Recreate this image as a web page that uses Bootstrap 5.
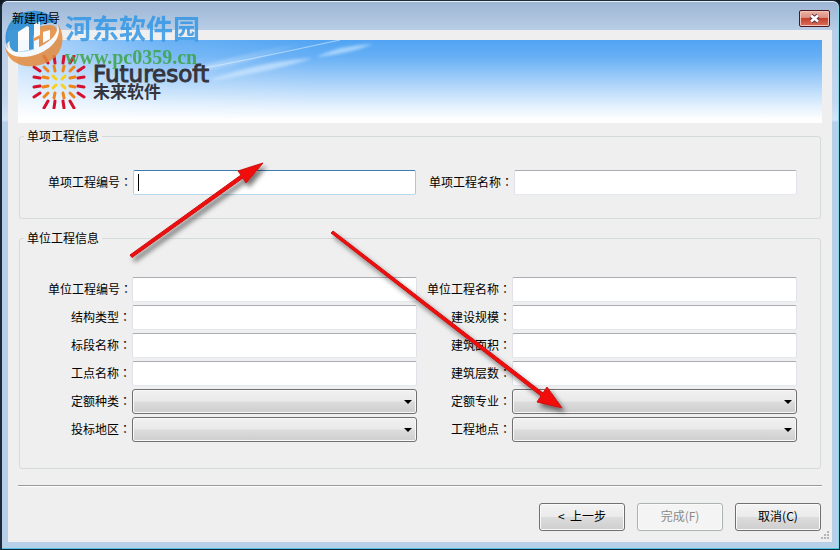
<!DOCTYPE html>
<html lang="zh-CN">
<head>
<meta charset="utf-8">
<meta name="viewport" content="width=device-width, initial-scale=1">
<title>新建向导</title>
<link href="https://cdn.jsdelivr.net/npm/bootstrap@5.3.0/dist/css/bootstrap.min.css" rel="stylesheet">
<style>
body{font-family:"Noto Sans CJK SC","Liberation Sans",sans-serif;font-size:12px;line-height:16px;color:#000;background:#101820}
.win{border:1px solid #1c2a3a;border-left-width:2px;border-bottom-color:#0b2b38;border-radius:7px 7px 0 0;
  background:linear-gradient(#9cb5d4 0,#b9cee6 30px,#c3d7ee 100px,#d3e4f6 119px,#b7d0ea 121px);box-shadow:inset 0 1px #e6eef8,inset 0 -1px #53c3e4,inset -1px 0 #86d6ee}
.title-strip{height:29px;padding:3px 9px 0 10px}
.title-text{margin-top:6px;z-index:2}
.close-btn{width:31px;height:17px;margin-top:6px;border:1px solid #4a1720;border-radius:2px;background:linear-gradient(#eab5a8,#dc8a7b 48%,#c5402c 50%,#d9705b);box-shadow:inset 0 0 0 1px #f3c3ba}
.client{margin:0 7px 7px 6px;padding:10px;background:#efefef}
.banner{height:83px;padding:15px 14px 0;background:linear-gradient(90deg,#ffffff99,#ffffff22 150px,#fff0 300px),linear-gradient(#51a4f3,#66aff5 20%,#a6d0f9 50%,#e0effd 78%,#fff 96%)}
.rays{left:150px;top:0;width:260px;height:83px}
.brand{margin-left:7px;color:#35353d}
.brand-en{font:23px/20px "DejaVu Sans",sans-serif;-webkit-text-stroke:1px #35353d;margin-top:9px}
.brand-zh{font-size:17px;line-height:14px;font-weight:700}
.group{border:1px solid #d5dadd;border-radius:3px;margin:0 1px;min-width:0}
.group legend{font-size:12px;line-height:16px;margin:0 0 0 4px;padding:0 3px}
.group-a{margin-top:5px;padding:26px 23px 23px 0}
.group-b{margin-top:11px;padding:31px 23px 26px 0}
.fields{row-gap:3px}
.group-a .fields{grid-template-columns:113px 1fr 98px 1fr}
.group-b .fields{grid-template-columns:112px 1fr 95px 1fr}
.fields label{white-space:nowrap;text-align:right;padding-bottom:2px}
.group-a .fields label{padding-right:1px}
.group-b .fields input + label,.group-b .fields select + label{padding-right:1px}
.colon{font-family:"Noto Sans CJK TC",sans-serif}
.fields .form-control,.fields .form-select{height:25px;min-height:0;padding:2px 4px;font-size:12px;line-height:16px;border-radius:2px;min-width:0}
.fields .form-control{border-color:#abadb3 #e0e2e8 #e3e9ef #e0e2e8;background-color:#fff}
.fields .editing{border-color:#3d7bad #a4c9e3 #b7d9ed #b5cfe7;background:linear-gradient(#000,#000) 4px 3px/1px 17px no-repeat #fff}
.fields .form-select{border:1px solid #707070;border-radius:3px;box-shadow:inset 0 0 0 1px #f8f8f8;
  background:url("data:image/svg+xml,%3Csvg xmlns='http://www.w3.org/2000/svg' width='8' height='4'%3E%3Cpath d='M0 0h8L4 4z'/%3E%3C/svg%3E") right 4px center/8px 4px no-repeat,linear-gradient(#f1f1f1,#e9e9e9 48%,#dcdcdc 52%,#cecece)}
.rule{margin:16px 0;border-top:1px solid #9a9a9a;border-bottom:1px solid #fff;opacity:1;height:0}
.actions{gap:12px;margin-right:1px}
.wiz-btn{width:86px;height:28px;padding:0 0 2px;font-size:12px;line-height:16px;color:#000;border:1px solid #707070;border-radius:3px;background:linear-gradient(#f3f3f3,#ebebeb 48%,#dcdcdc 52%,#cecece);box-shadow:inset 0 0 0 1px #fafafa}
.wiz-btn:disabled{opacity:1;color:#8a8a8a;border-color:#adb2b5;background:#f4f4f4}
.stamp{left:2px;top:9px;opacity:.85;pointer-events:none}
.stamp-text{margin-left:2px}
.stamp-zh{font-size:27px;line-height:36px;font-weight:700;color:#3397e6}
.stamp-url{font:700 20px/22px "Liberation Serif",serif;color:#3ba545}
.arrows{left:0;top:0;pointer-events:none}
.grip{right:10px;bottom:9px}
</style>
<script src="https://cdn.jsdelivr.net/npm/bootstrap@5.3.0/dist/js/bootstrap.bundle.min.js"></script>
</head>
<body>
<div class="win position-relative min-vh-100 d-flex flex-column">
  <header class="title-strip d-flex align-items-start justify-content-between">
    <span class="title-text position-relative">新建向导</span>
    <button type="button" class="close-btn p-0 d-flex align-items-center justify-content-center" aria-label="关闭">
      <svg width="13" height="11" viewBox="0 0 13 11"><path d="M3 2.500 10 8.500M10 2.500 3 8.500" stroke="#583040" stroke-width="4.500"/><path d="M3 2.500 10 8.500M10 2.500 3 8.500" stroke="#fff" stroke-width="2.600"/></svg>
    </button>
  </header>

  <main class="client flex-grow-1">
    <div class="banner position-relative d-flex align-items-start">
      <svg class="rays position-absolute" viewBox="0 0 260 83" aria-hidden="true">
        <defs>
          <filter id="soft" x="-20%" y="-100%" width="140%" height="300%"><feGaussianBlur stdDeviation="1.500"/></filter>
          <linearGradient id="fade"><stop offset="0" stop-color="#fff" stop-opacity=".6"/><stop offset="1" stop-color="#fff" stop-opacity=".1"/></linearGradient>
        </defs>
        <path d="M20 31Q95 17 172 0" fill="none" stroke="#c9e5ff" stroke-width="1.200" opacity=".65"/>
        <path d="M15 31Q90 10 130 4Q100 20 20 34z" fill="url(#fade)" filter="url(#soft)" opacity=".6"/>
        <path d="M45 39Q90 22 145 18Q110 30 45 41z" fill="#d3eaff" filter="url(#soft)" opacity=".65"/>
        <path d="M150 16Q175 5 205 4Q180 14 150 17z" fill="#c5e5ff" filter="url(#soft)" opacity=".7"/>
      </svg>
      <svg class="position-relative flex-shrink-0" width="54" height="54" viewBox="-27 -27 54 54" fill="none" stroke-width="3" stroke-linecap="round" aria-hidden="true">
        <g stroke="#d5112f">
          <path d="M-11-19-15-26M-4-19-5-26M4-19 5-26M11-19 15-26M-11 19-15 26M-4 19-5 26M4 19 5 26M11 19 15 26"/>
          <path d="M-19-11-25-15M-19-4-25-5M-19 4-25 5M-19 11-25 15M19-11 25-15M19-4 25-5M19 4 25 5M19 11 25 15"/>
        </g>
        <g stroke="#ef8519">
          <path d="M-11-11-15-15M-4-11-5-16M4-11 5-16M11-11 15-15M-11 11-15 15M-4 11-5 16M4 11 5 16M11 11 15 15"/>
          <path d="M-11-4-16-5M-11 4-16 5M11-4 16-5M11 4 16 5"/>
        </g>
        <path stroke="#f7d21c" d="M-3-3-6-6M3-3 6-6M-3 3-6 6M3 3 6 6"/>
      </svg>
      <div class="brand position-relative">
        <div class="brand-en">Futuresoft</div>
        <div class="brand-zh">未来软件</div>
      </div>
    </div>

    <form>
      <fieldset class="group group-a">
        <legend class="float-none w-auto">单项工程信息</legend>
        <div class="fields d-grid align-items-center">
          <label for="itemNo">单项工程编号<span class="colon" lang="zh-TW">：</span></label><input id="itemNo" type="text" class="form-control editing">
          <label for="itemName">单项工程名称<span class="colon" lang="zh-TW">：</span></label><input id="itemName" type="text" class="form-control">
        </div>
      </fieldset>

      <fieldset class="group group-b">
        <legend class="float-none w-auto">单位工程信息</legend>
        <div class="fields d-grid align-items-center">
          <label for="unitNo">单位工程编号<span class="colon" lang="zh-TW">：</span></label><input id="unitNo" type="text" class="form-control">
          <label for="unitName">单位工程名称<span class="colon" lang="zh-TW">：</span></label><input id="unitName" type="text" class="form-control">
          <label for="structure">结构类型<span class="colon" lang="zh-TW">：</span></label><input id="structure" type="text" class="form-control">
          <label for="scale">建设规模<span class="colon" lang="zh-TW">：</span></label><input id="scale" type="text" class="form-control">
          <label for="section">标段名称<span class="colon" lang="zh-TW">：</span></label><input id="section" type="text" class="form-control">
          <label for="area">建筑面积<span class="colon" lang="zh-TW">：</span></label><input id="area" type="text" class="form-control">
          <label for="site">工点名称<span class="colon" lang="zh-TW">：</span></label><input id="site" type="text" class="form-control">
          <label for="floors">建筑层数<span class="colon" lang="zh-TW">：</span></label><input id="floors" type="text" class="form-control">
          <label for="quota">定额种类<span class="colon" lang="zh-TW">：</span></label><select id="quota" class="form-select"><option></option></select>
          <label for="major">定额专业<span class="colon" lang="zh-TW">：</span></label><select id="major" class="form-select"><option></option></select>
          <label for="region">投标地区<span class="colon" lang="zh-TW">：</span></label><select id="region" class="form-select"><option></option></select>
          <label for="place">工程地点<span class="colon" lang="zh-TW">：</span></label><select id="place" class="form-select"><option></option></select>
        </div>
      </fieldset>

      <hr class="rule">
      <div class="actions d-flex justify-content-end">
        <button type="button" class="btn wiz-btn">&lt;&nbsp; 上一步</button>
        <button type="submit" class="btn wiz-btn" disabled>完成(F)</button>
        <button type="button" class="btn wiz-btn">取消(C)</button>
      </div>
    </form>
  </main>

  <div class="stamp position-absolute d-flex align-items-start">
    <svg width="59" height="60" viewBox="4 10 59 60" aria-hidden="true">
      <path d="M6 44C3 26 15 12 32 11c11-1 20 4 25 13-8-3-16 0-22 4C24 33 13 38 6 44z" fill="#2389d2"/>
      <path d="M10 40C20 33 33 27 45 26v10L34 49 17 52c-5 0-9-6-7-12z" fill="#2389d2"/>
      <path d="M39 27c11-4 18-2 18 4 0 9-8 15-14 17l-3 6h-7V36z" fill="#e58c3c"/>
      <path d="M18 32l9-6 2 1v23l-11 2z" fill="#fff"/>
      <path d="M34 24l6-3v14l-6 3z" fill="#fff"/>
      <path d="M43 32l7-2v9l-7 4z" fill="#fff"/>
      <path d="M34 41l5-2v10l-5 3z" fill="#fff"/>
      <path d="M5 45c4 12 20 11 33 6 14-6 23-16 20-27 9 14 4 31-10 38C28 72 6 64 5 45z" fill="#e58c3c"/>
      <path d="M5 44c3 10 17 10 30 5 15-6 25-16 22-25 6 10-3 24-19 30C22 60 6 57 5 44z" fill="#fff"/>
    </svg>
    <div class="stamp-text">
      <div class="stamp-zh">河东软件园</div>
      <div class="stamp-url">www.pc0359.cn</div>
    </div>
  </div>

  <svg class="arrows position-absolute" width="600" height="430" viewBox="2 1 600 430" aria-hidden="true">
    <defs><filter id="drop" x="-10%" y="-10%" width="125%" height="125%"><feDropShadow dx="3" dy="4" stdDeviation="2.500" flood-color="#000" flood-opacity=".55"/></filter></defs>
    <g filter="url(#drop)" fill="#f20d0d" stroke="#c81414" stroke-width="1" stroke-linejoin="round">
      <path d="M263 163 246 183 243 178 132 257.500 130 255 241 175 238 171z"/>
      <path d="M562 408 537 402 541 396 331 233 333 231 543 393 547 387z"/>
    </g>
  </svg>
  <svg class="grip position-absolute" width="9" height="9" viewBox="0 0 9 9" fill="#b5b5b5" aria-hidden="true"><path d="M7 0h2v2H7zM7 3h2v2H7zM7 6h2v2H7zM4 3h2v2H4zM4 6h2v2H4zM1 6h2v2H1z"/></svg>
</div>
</body>
</html>
